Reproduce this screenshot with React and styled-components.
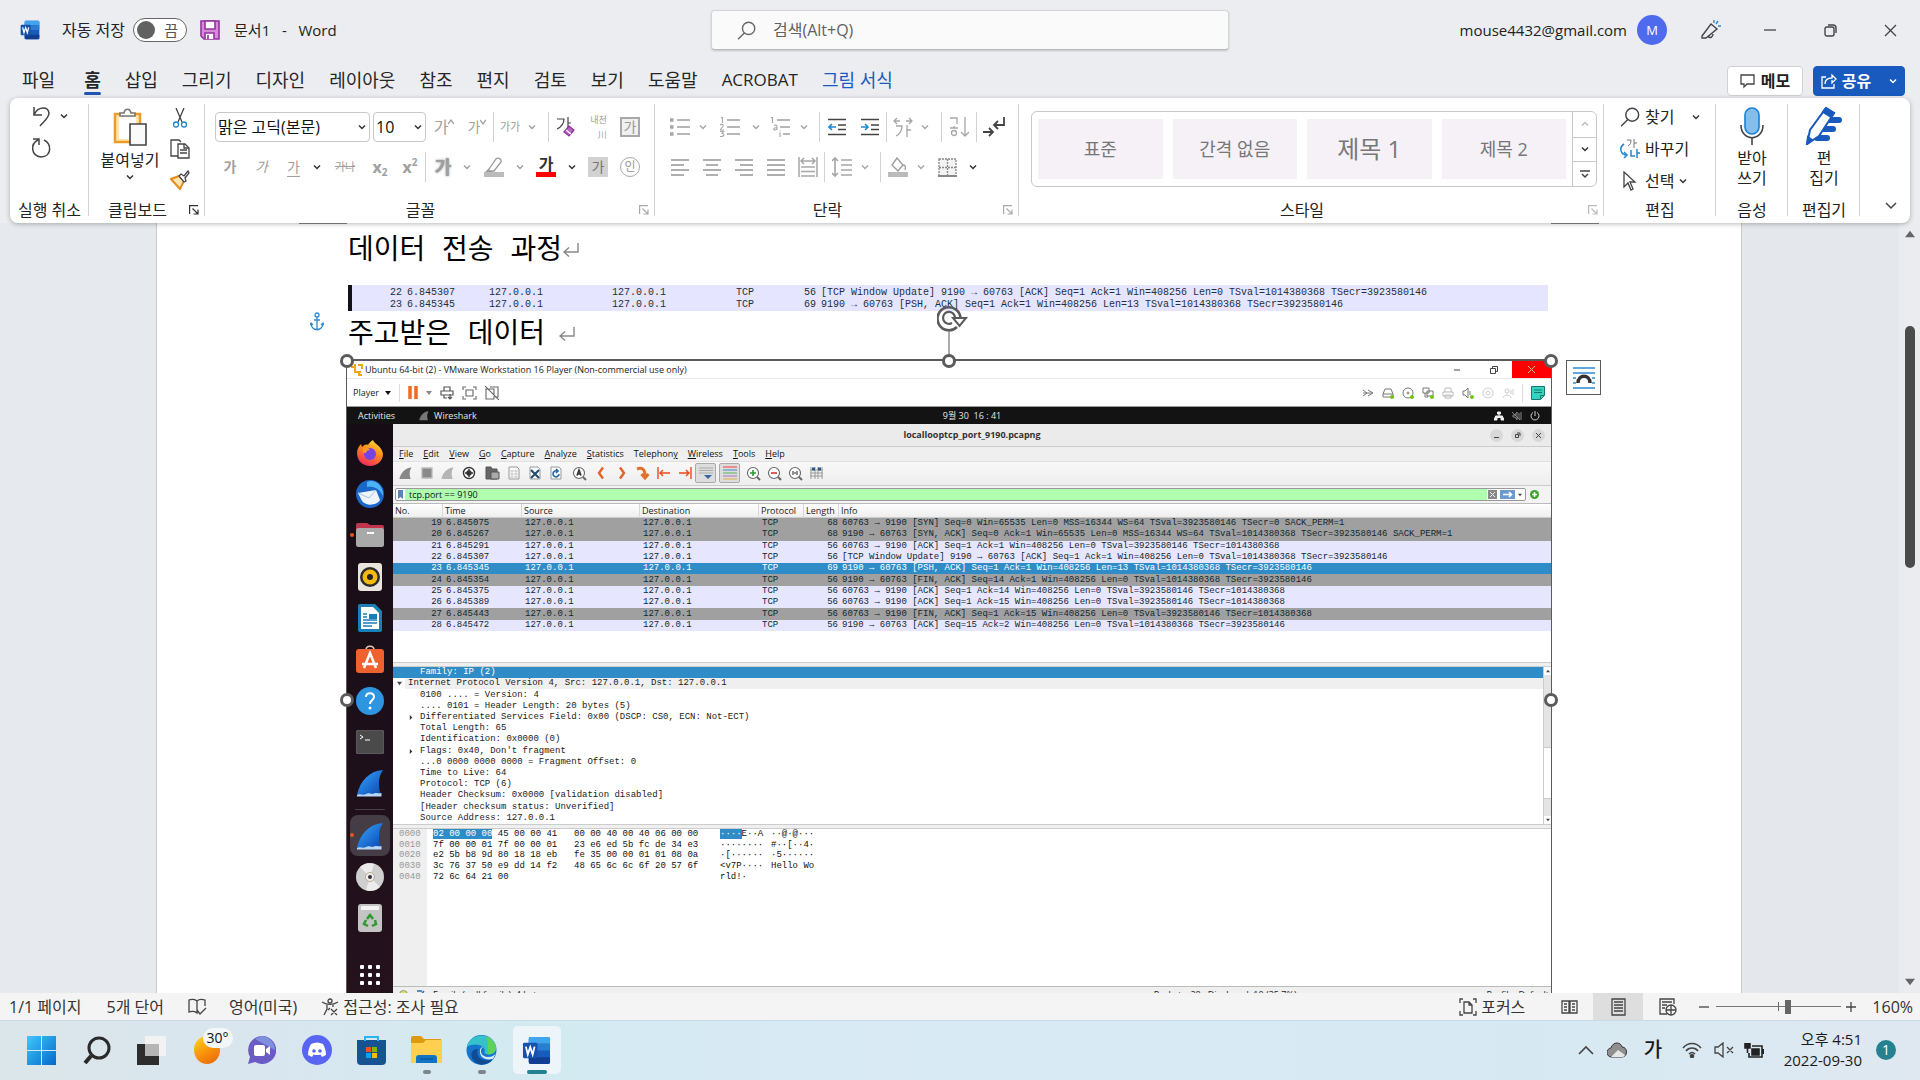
import React from "react";
import styled, { createGlobalStyle, css } from "styled-components";

const ui = `"Open Sans", "Noto Sans CJK KR", sans-serif`;
const mono = `"Liberation Mono", "Noto Sans CJK KR", monospace`;

const Global = createGlobalStyle`
  * { box-sizing: border-box; }
  body { margin: 0; font-family: ${ui}; font-size: 16px; line-height: 20px; color: #222; }
  button, input, select { font: inherit; color: inherit; margin: 0; padding: 0; border: 0; background: none; }
  button { display: flex; align-items: center; justify-content: center; white-space: nowrap; }
  svg { display: block; flex: none; }
`;

const Shell = styled.div`
  height: 100vh;
  min-width: 1600px;
  display: flex;
  flex-direction: column;
  overflow: hidden;
  background: #ebedf1;
`;

/* ---------- generic drawing ---------- */
const Svg = ({ w = 20, h = w, box, sw = 1.3, c = "#444", fill = "none", children }) => (
  <svg width={w} height={h} viewBox={box || `0 0 ${w} ${h}`} fill={fill} stroke={c} strokeWidth={sw} aria-hidden="true">
    {children}
  </svg>
);
const Chevron = ({ c = "#333" }) => (
  <Svg w={8} h={6} c={c} sw={1.5}><path d="M1 1.500 4 4.500 7 1.500" /></Svg>
);

/* ---------- title bar ---------- */
const TitleBar = styled.header`
  height: 60px;
  flex: none;
  display: grid;
  grid-template-columns: 1fr 518px 1fr;
  padding-left: 20px;
  align-items: center;
`;
const TitleLeft = styled.div`
  display: flex;
  align-items: center;
`;
const AutoSave = styled.label`
  display: flex;
  align-items: center;
  gap: 8px;
  margin: 0 13px 0 22px;
`;
const Switch = styled.span`
  width: 54px;
  height: 24px;
  display: flex;
  align-items: center;
  justify-content: space-between;
  padding: 0 8px 0 3px;
  border: 1px solid #666;
  border-radius: 12px;
  background: #fff;
  color: #555;
  font-size: 15px;
`;
const SwitchBox = styled.input`
  appearance: none;
  width: 18px;
  height: 18px;
  border-radius: 50%;
  background: #616161;
`;
const DocName = styled.span`
  margin-left: 14px;
  white-space: pre;
  font-size: 15px;
`;
const SearchBox = styled.label`
  height: 40px;
  display: flex;
  align-items: center;
  gap: 17px;
  padding: 0 25px;
  background: #fafafa;
  border: 1px solid #d4d5d8;
  border-bottom-color: #bbb;
  border-radius: 4px;
  box-shadow: 0 1px 2px rgba(0, 0, 0, 0.18);
`;
const SearchInput = styled.input`
  flex: 1;
  outline: none;
  &::placeholder { color: #616161; opacity: 1; }
`;
const TitleRight = styled.div`
  display: flex;
  align-items: center;
  justify-content: flex-end;
  font-size: 15px;
`;
const Avatar = styled.button`
  width: 30px;
  height: 30px;
  margin: 0 15px 0 10px;
  border-radius: 50%;
  background: #4f6bed;
  color: #fff;
  font-size: 13px;
`;
const WinButton = styled.button`
  width: 60px;
  height: 40px;
`;
const PenButton = styled(WinButton)`
  width: 58px;
`;

/* ---------- tabs ---------- */
const TabBar = styled.nav`
  height: 38px;
  flex: none;
  display: flex;
  align-items: center;
  gap: 10px;
  padding: 4px 15px 0;
`;
const Tab = styled.button`
  height: 34px;
  padding: 0 7px;
  margin-right: ${(p) => (p.$file ? 5 : 0)}px;
  font-size: ${(p) => (p.$latin ? 17 : 18)}px;
  color: ${(p) => (p.$blue ? "#185abd" : "#262626")};
  font-weight: ${(p) => (p.$on ? 700 : 400)};
  border-bottom: 3px solid transparent;
  position: relative;
  ${(p) => p.$on && css`
    &::after {
      content: "";
      position: absolute;
      left: 7px;
      right: 7px;
      bottom: 0;
      height: 3px;
      border-radius: 2px;
      background: #1f55b0;
    }
  `}
`;
const TabSpace = styled.span`
  flex: 1;
`;
const MemoButton = styled.button`
  width: 76px;
  height: 30px;
  gap: 5px;
  background: #fff;
  border: 1px solid #d1d1d1;
  border-radius: 4px;
  font-weight: 700;
`;
const ShareButton = styled(MemoButton)`
  width: 92px;
  border-color: #185abd;
  background: #185abd;
  color: #fff;
`;

/* ---------- ribbon ---------- */
const Ribbon = styled.section`
  flex: none;
  height: 125px;
  margin: 0 10px;
  display: flex;
  align-items: stretch;
  padding: 6px 0 3px;
  background: #fff;
  border-radius: 8px;
  box-shadow: 0 1px 5px rgba(0, 0, 0, 0.28);
  position: relative;
  z-index: 3;
`;
const Group = styled.div`
  width: ${(p) => p.$w}px;
  ${(p) => p.$grow && "flex: 1;"}
  display: flex;
  flex-direction: column;
  background: linear-gradient(#d1d1d1, #d1d1d1) right top / 1px 112px no-repeat;
`;
const GroupBody = styled.div`
  flex: 1;
  display: flex;
  flex-direction: ${(p) => (p.$row ? "row" : "column")};
  gap: ${(p) => p.$gap || 0}px;
  padding: ${(p) => p.$pad || "0"};
`;
const GroupLabel = styled.div`
  height: 20px;
  display: flex;
  align-items: center;
  white-space: nowrap;
`;
const LabelText = styled.span`
  flex: 1;
  text-align: center;
`;
const Launcher = styled.button`
  width: 16px;
  margin-right: 3px;
`;
const Row = styled.div`
  display: flex;
  align-items: center;
  height: ${(p) => p.$h || 30}px;
`;
const Tool = styled.button`
  width: ${(p) => p.$w}px;
  height: 30px;
  color: ${(p) => p.$c || "#a0a0a0"};
  font-size: ${(p) => p.$fs || 16}px;
  font-weight: ${(p) => (p.$bold ? 700 : 400)};
  font-style: ${(p) => (p.$italic ? "italic" : "normal")};
  text-decoration: ${(p) => p.$deco || "none"};
  text-underline-offset: 4px;
  ${(p) => p.$glow && "text-shadow: 0 0 1px #888, 0 0 3px #aaa;"}
`;
const Rule = styled.span`
  width: 1px;
  height: 30px;
  background: #d1d1d1;
  margin-left: ${(p) => p.$ml || 0}px;
`;
const Combo = styled.label`
  width: ${(p) => p.$w}px;
  height: 30px;
  margin-right: ${(p) => p.$mr || 0}px;
  padding: 0 3px 0 2px;
  display: flex;
  align-items: center;
  border: 1px solid #c8c8c8;
  border-radius: 4px;
`;
const ComboSelect = styled.select`
  appearance: none;
  flex: 1;
  min-width: 0;
  color: #111;
  outline: none;
`;
const Boxed = styled.span`
  width: 20px;
  height: 20px;
  display: flex;
  align-items: center;
  justify-content: center;
  font-size: 14px;
  line-height: 14px;
  color: ${(p) => (p.$dark ? "#777" : "#999")};
  background: ${(p) => p.$bg || "#f0f0f0"};
  border: ${(p) => (p.$bg ? 0 : 2)}px solid #a8a8a8;
  ${(p) => p.$round && "border-radius: 50%; border-width: 1px; background: #fff; font-size: 12px;"}
`;
const Bar = styled.span`
  display: flex;
  flex-direction: column;
  align-items: center;
  width: 20px;
  font-size: 16px;
  line-height: 15px;
  font-weight: 700;
  color: #333;
  border-bottom: 5px solid ${(p) => p.$c};
`;
const Script = styled.span`
  font-size: 10px;
  line-height: 10px;
  align-self: ${(p) => (p.$up ? "flex-start" : "flex-end")};
  padding: 5px 0;
`;
const Tiny = styled.span`
  display: flex;
  flex-direction: column;
  align-items: flex-end;
  gap: 1px;
  font-size: 9px;
  line-height: 14px;
`;
const PasteButton = styled.button`
  flex-direction: column;
  justify-content: flex-start;
  gap: 4px;
  width: 60px;
`;
const IconColumn = styled.div`
  display: flex;
  flex-direction: column;
  gap: 11px;
  button { width: 24px; height: 20px; }
`;
const Gallery = styled.div`
  flex: 1;
  height: 76px;
  margin: 7px 7px 0 12px;
  display: flex;
  border: 1px solid #c8c8c8;
  border-radius: 6px;
`;
const Cards = styled.div`
  flex: 1;
  display: grid;
  grid-template-columns: repeat(4, 1fr);
  gap: 10px;
  padding: 7px 6px;
`;
const StyleCard = styled.button`
  background: #f5f1f7;
  color: #777;
  font-size: ${(p) => p.$fs}px;
`;
const GalleryNav = styled.div`
  width: 24px;
  display: grid;
  grid-template-rows: repeat(3, 1fr);
  border-left: 1px solid #c8c8c8;
  button + button { border-top: 1px solid #c8c8c8; }
`;
const EditButton = styled.button`
  justify-content: flex-start;
  gap: 5px;
  height: 24px;
  color: #222;
`;
const Gap = styled.span`
  width: 8px;
`;
const TallButton = styled.button`
  flex-direction: column;
  gap: 3px;
  margin: 0 auto;
`;
const Collapse = styled.button`
  width: 50px;
  align-items: flex-end;
  padding: 0 0 10px 12px;
`;

/* ---------- document ---------- */
const Workspace = styled.main`
  flex: 1;
  min-height: 0;
  display: flex;
  overflow: hidden;
  background: linear-gradient(90deg, #e6eaee, #e4e7ec);
`;
const Canvas = styled.div`
  flex: 1;
  padding: 0 157px 0 156px;
  overflow: hidden;
`;
const Page = styled.article`
  min-height: 1200px;
  padding: 0 190px;
  background: #fff;
  border: solid #c6c9ce;
  border-width: 0 1px;
  position: relative;
`;
const Margins = styled.div`
  display: flex;
  justify-content: space-between;
  height: 1px;
  margin: 0 -48px;
  &::before, &::after { content: ""; width: 48px; background: #888; }
`;
const Heading = styled.h1`
  margin: 0;
  height: ${(p) => p.$h}px;
  padding: ${(p) => p.$pad} 0 ${(p) => p.$pb}px 1px;
  display: flex;
  align-items: center;
  gap: ${(p) => p.$gap || 1}px;
  font: 400 28px/32px ${mono};
  color: #000;
  white-space: pre;
  & > svg { margin-bottom: 4px; }
`;
const Strip = styled.table`
  width: calc(100% - 4px);
  height: 26px;
  margin-left: 1px;
  border-spacing: 0;
  table-layout: fixed;
  background: #e6e5ff;
  border-left: 4px solid #16101c;
  font: 10px/12px ${mono};
  color: #22303a;
  td { height: 12px; padding: 0; white-space: pre; overflow: hidden; }
  tr:first-child td { height: 14px; vertical-align: bottom; }
`;
const Num = styled.td`
  text-align: right;
`;
const AnchorMark = styled.span`
  position: absolute;
  left: 153px;
  top: 89px;
`;
const Picture = styled.figure`
  position: relative;
  margin: 0 -1px;
  height: 680px;
  border: solid #5b5b5b;
  border-width: 2px 1px 1px;
  display: flex;
  flex-direction: column;
  background: #fff;
`;
const Handle = styled.span`
  position: absolute;
  left: ${(p) => p.$x};
  top: ${(p) => p.$y};
  width: 14px;
  height: 14px;
  margin: -7px;
  border: 3px solid #5b5b5b;
  border-radius: 50%;
  background: #fff;
`;
const Rotate = styled.span`
  position: absolute;
  left: 50%;
  top: -58px;
  width: 32px;
  margin-left: -12px;
`;
const LayoutOptions = styled.button`
  position: absolute;
  right: -50px;
  top: -1px;
  width: 35px;
  height: 35px;
  border: 1px solid #5b5b5b;
  background: #fff;
`;
const VmTitle = styled.div`
  height: 18px;
  flex: none;
  display: flex;
  align-items: center;
  padding-left: 3px;
  gap: 2px;
  border-bottom: 1px solid #e6e6e6;
  font-size: 9px;
  line-height: 16px;
  color: #222;
`;
const VmButtons = styled.div`
  margin-left: auto;
  display: flex;
  align-self: stretch;
`;
const VmButton = styled.button`
  width: ${(p) => p.$w}px;
  background: ${(p) => (p.$red ? "#f00" : "transparent")};
`;
const VmBar = styled.div`
  height: 28px;
  flex: none;
  display: flex;
  align-items: center;
  padding: 0 6px;
  gap: 8px;
  font-size: 9px;
  border-bottom: 1px solid #999;
`;
const VmRule = styled.span`
  width: 1px;
  height: 18px;
  background: #ddd;
`;
const Push = styled.span`
  margin-left: auto;
`;
const PlayerButton = styled.button`
  gap: 6px;
`;
const TopBar = styled.div`
  height: 17px;
  flex: none;
  display: grid;
  grid-template-columns: 46px 1fr auto 1fr;
  align-items: center;
  background: #131313;
  color: #e6e6e6;
  font-size: 9px;
  line-height: 16px;
  white-space: nowrap;
`;
const TopLeft = styled.div`
  display: flex;
  grid-column: 1 / 3;
  grid-row: 1;
  gap: 24px;
  padding-left: 11px;
`;
const TopApp = styled.span`
  display: flex;
  align-items: center;
  gap: 5px;
`;
const Clock = styled.span`
  grid-column: 3;
  grid-row: 1;
`;
const TopRight = styled.div`
  grid-column: 4;
  grid-row: 1;
  justify-self: end;
  display: flex;
  gap: 8px;
  padding-right: 11px;
`;
const Desktop = styled.div`
  flex: 1;
  min-height: 0;
  display: flex;
`;
const Dock = styled.div`
  width: 46px;
  flex: none;
  padding-top: 8px;
  background: linear-gradient(#150d16, #25121d);
  display: flex;
  flex-direction: column;
  align-items: center;
`;
const DockList = styled.div`
  height: 372px;
  display: flex;
  flex-direction: column;
`;
const DockItem = styled.button`
  width: 46px;
  flex: ${(p) => (p.$fixed ? "none" : "1")};
  height: 41px;
  position: relative;
  ${(p) => p.$dot && css`
    &::before {
      content: "";
      position: absolute;
      left: 3px;
      top: 18px;
      width: 4px;
      height: 4px;
      border-radius: 50%;
      background: #e95420;
    }
  `}
`;
const DockRule = styled.span`
  width: 30px;
  height: 1px;
  margin: 5px 0;
  background: #4b3f48;
`;
const DockActive = styled.span`
  width: 40px;
  height: 41px;
  display: flex;
  align-items: center;
  justify-content: center;
  border-radius: 8px;
  background: #453d45;
`;
const DockFoot = styled.div`
  margin-top: 27px;
`;
const Shark = styled.div`
  flex: 1;
  min-width: 0;
  display: flex;
  flex-direction: column;
  background: #fff;
  font-size: 9px;
  line-height: 12px;
`;
const SharkTitle = styled.div`
  height: 23px;
  flex: none;
  display: grid;
  grid-template-columns: 1fr auto 1fr;
  align-items: center;
  background: #ebebeb;
  border-bottom: 1px solid #ccc;
  font-weight: 700;
  color: #333;
`;
const SharkWin = styled.div`
  justify-self: end;
  display: flex;
  gap: 8px;
  padding-right: 6px;
`;
const RoundButton = styled.button`
  width: 13px;
  height: 13px;
  border-radius: 50%;
  background: #d8d8d8;
`;
const MenuBar = styled.div`
  height: 15px;
  flex: none;
  display: flex;
  align-items: center;
  gap: 10px;
  padding-left: 6px;
  background: #efefef;
  border-bottom: 1px solid #e0e0e0;
  color: #111;
`;
const SharkTools = styled.div`
  height: 24px;
  flex: none;
  display: flex;
  align-items: flex-start;
  padding: 1px 0 0 2px;
  background: linear-gradient(#f8f8f8, #eee);
  border-bottom: 1px solid #ccc;
`;
const SharkTool = styled.button`
  width: 21px;
  height: 20px;
  margin-left: ${(p) => p.$ml || 0}px;
  ${(p) => p.$on && "background: #ddd; border: 1px solid #aaa; border-radius: 2px;"}
`;
const FilterRow = styled.div`
  height: 18px;
  flex: none;
  display: flex;
  align-items: center;
  gap: 4px;
  padding: 0 12px 0 2px;
  background: #f3f3f3;
  border-bottom: 1px solid #bbb;
`;
const FilterBox = styled.label`
  flex: 1;
  height: 13px;
  display: flex;
  align-items: center;
  gap: 3px;
  padding: 0 3px 0 2px;
  border: 1px solid #999;
  border-radius: 2px;
  background: linear-gradient(90deg, #fff 9px, #afffaf 9px calc(100% - 38px), #fff calc(100% - 38px));
`;
const FilterInput = styled.input`
  flex: 1;
  height: 11px;
  padding-left: 3px;
  line-height: 11px;
  color: #111;
  outline: none;
`;
const PacketPane = styled.div`
  height: 159px;
  flex: none;
  border-bottom: 1px solid #ccc;
`;
const Packets = styled.table`
  width: 100%;
  height: 127px;
  table-layout: fixed;
  border-spacing: 0;
  th {
    height: 14px;
    padding: 0 0 0 2px;
    text-align: left;
    font-weight: 400;
    color: #222;
    background: linear-gradient(#fff, #eee);
    border-right: 1px solid #d8d8d8;
    border-bottom: 1px solid #ccc;
  }
  th:last-child { border-right: 0; }
  td {
    padding: 0 0 0 3px;
    font: 9px/11px ${mono};
    white-space: pre;
  }
  td:nth-child(1), td:nth-child(6) { padding: 0 1px 0 0; text-align: right; }
`;
const tones = {
  gray: ["#a0a0a0", "#12272e"],
  lilac: ["#e7e6ff", "#12272e"],
  blue: ["#308cc6", "#fff"],
};
const PacketRow = styled.tr`
  background: ${(p) => tones[p.$tone][0]};
  color: ${(p) => tones[p.$tone][1]};
`;
const Split = styled.div`
  height: ${(p) => p.$h}px;
  flex: none;
  background: #efefef;
  border-bottom: 1px solid #ccc;
`;
const Details = styled.div`
  height: 158px;
  flex: none;
  display: flex;
  border-bottom: 1px solid #ccc;
`;
const Tree = styled.ul`
  flex: 1;
  margin: 0;
  padding: 0;
  list-style: none;
  display: grid;
  grid-template-rows: repeat(14, 1fr);
  font: 9px/11px ${mono};
  color: #222;
`;
const Leaf = styled.li`
  display: flex;
  align-items: center;
  white-space: pre;
  padding-left: ${(p) => (p.$top ? 3 : 15)}px;
  background: ${(p) => (p.$sel ? "#308cc6" : p.$top ? "linear-gradient(90deg, #fff 12px, #efefef 12px)" : "transparent")};
  color: ${(p) => (p.$sel ? "#fff" : "inherit")};
`;
const Twist = styled.span`
  width: 12px;
  display: flex;
  padding-left: 1px;
`;
const MiniScroll = styled.div`
  width: 8px;
  display: flex;
  flex-direction: column;
  background: #e4e4e4;
  border-left: 1px solid #ccc;
`;
const MiniArrow = styled.span`
  height: 8px;
  display: flex;
  align-items: center;
  justify-content: center;
  background: #fff;
`;
const MiniThumb = styled.span`
  height: 52px;
  margin: ${(p) => p.$top}px 0 auto;
  background: #fff;
  border: solid #ccc;
  border-width: 1px 0;
`;
const HexPane = styled.div`
  flex: none;
  height: 157px;
  background: linear-gradient(90deg, #efefef 34px, #fff 34px);
`;
const Hex = styled.table`
  height: 53px;
  border-spacing: 0;
  table-layout: fixed;
  width: 480px;
  font: 9px/10px ${mono};
  color: #111;
  td { padding: 0; white-space: pre; }
  td:first-child { padding-left: 6px; color: #999; }
`;
const Mark = styled.mark`
  background: #308cc6;
  color: #fff;
`;
const SharkStatus = styled.div`
  flex: none;
  height: 16px;
  display: flex;
  align-items: center;
  gap: 8px;
  padding: 0 2px 0 6px;
  background: #efefef;
  border-top: 1px solid #bbb;
`;
const StatusSpread = styled.span`
  margin-left: auto;
  margin-right: ${(p) => p.$mr || 0}px;
`;
const ScrollRail = styled.div`
  width: 21px;
  flex: none;
  display: flex;
  flex-direction: column;
  align-items: center;
  justify-content: space-between;
  padding: 6px 0;
  background: #eaecef;
`;
const ScrollTrack = styled.div`
  flex: 1;
  padding-top: 87px;
`;
const ScrollThumb = styled.div`
  width: 10px;
  height: 242px;
  border-radius: 5px;
  background: #4b4b4b;
`;

/* ---------- status bar ---------- */
const StatusBar = styled.footer`
  height: 28px;
  flex: none;
  display: flex;
  align-items: center;
  padding: 0 7px 0 9px;
  background: #f4f4f4;
  border-bottom: 1px solid #c9dbe6;
  color: #333;
`;
const StatusButton = styled.button`
  gap: 4px;
  height: 27px;
  margin-right: ${(p) => p.$mr || 0}px;
  width: ${(p) => (p.$w ? p.$w + "px" : "auto")};
  background: ${(p) => (p.$on ? "#dedede" : "transparent")};
`;
const StatusSpace = styled.span`
  flex: 1;
`;
const Zoom = styled.input`
  appearance: none;
  width: 125px;
  height: 20px;
  margin: 0 5px 0 1px;
  outline: none;
  background:
    linear-gradient(#666, #666) center / 1px 9px no-repeat,
    linear-gradient(#777, #777) center / 100% 1px no-repeat;
  &::-webkit-slider-thumb { appearance: none; width: 6px; height: 14px; background: #666; }
`;

/* ---------- taskbar ---------- */
const Taskbar = styled.footer`
  height: 59px;
  flex: none;
  display: flex;
  align-items: center;
  padding: 0 24px 1px 14px;
  background: linear-gradient(90deg, #dbe6ea 0%, #d9e6ef 14%, #d3eaf1 28%, #d9eaf4 45%, #d6e9f2 80%, #dfe8f1 100%);
  color: #1a1a1a;
`;
const Task = styled.button`
  width: 55px;
  height: 50px;
  position: relative;
  &::after {
    content: "";
    position: absolute;
    bottom: 1px;
    width: ${(p) => (p.$active ? 20 : 8)}px;
    height: 4px;
    border-radius: 2px;
    background: ${(p) => (p.$active ? "#25808f" : p.$open ? "#7c868a" : "transparent")};
  }
`;
const Tile = styled.span`
  width: 48px;
  height: 48px;
  display: flex;
  align-items: center;
  justify-content: center;
  border-radius: 5px;
  background: #edf5fb;
`;
const Weather = styled.span`
  position: relative;
  width: 26px;
  height: 28px;
  border-radius: 50%;
  background: linear-gradient(150deg, #ffd91a, #f78a0a 60%, #e2650c);
`;
const Temp = styled.span`
  position: absolute;
  left: 9px;
  top: -8px;
  width: 30px;
  height: 20px;
  border-radius: 10px;
  background: #f4f7f8;
  font-size: 14px;
  color: #111;
`;
const Tray = styled.div`
  margin-left: auto;
  display: flex;
  align-items: center;
`;
const TrayButton = styled.button`
  width: ${(p) => p.$w || 30}px;
  height: 40px;
  font-size: ${(p) => (p.$ime ? 20 : 16)}px;
  font-weight: ${(p) => (p.$ime ? 500 : 400)};
`;
const DateTime = styled.button`
  flex-direction: column;
  align-items: flex-end;
  width: 91px;
  margin-right: 14px;
  font-size: 15px;
  line-height: 21px;
`;
const Notice = styled.button`
  width: 20px;
  height: 20px;
  border-radius: 50%;
  background: #25808f;
  color: #fff;
  font-size: 14px;
`;

/* ---------- icons ---------- */
const WordLogo = ({ s = 20 }) => (
  <svg width={s} height={s} viewBox="0 0 30 30" aria-hidden="true">
    <rect x="7" y="1" width="22" height="28" rx="2" fill="#185abd" />
    <path d="M7 3a2 2 0 0 1 2-2h18a2 2 0 0 1 2 2v5H7z" fill="#41a5ee" />
    <path d="M7 8h22v7H7z" fill="#2b7cd3" />
    <path d="M7 22h22v5a2 2 0 0 1-2 2H9a2 2 0 0 1-2-2z" fill="#103f91" />
    <rect x="1" y="7" width="15" height="16" rx="1.5" fill="#1652a9" />
    <path d="m4 11 2 8 2.500-7.500L11 19l2-8" fill="none" stroke="#fff" strokeWidth="1.900" />
  </svg>
);
const Lens = ({ s = 18, c = "#555", sw = 1.3 }) => (
  <Svg w={s} box="0 0 18 18" c={c} sw={sw}><circle cx="11" cy="7" r="5.800" /><path d="M7 11.300 1 17.300" /></Svg>
);
const LaunchIcon = ({ c }) => (
  <Svg w={10} c={c} sw={1.2}><path d="M9 .6H.6V9M3.500 3.500 9 9M9 4.500V9H4.500" /></Svg>
);
const Lines = ({ rows, c = "#a6a6a6" }) => (
  <Svg w={18} h={17} c={c} sw={1.8}>
    {rows.map(([a, b], i) => <path key={i} d={`M${a} ${1 + i * 5}H${b}`} />)}
  </Svg>
);
const listMarks = {
  dots: ["M0 3h3.500", "M0 10h3.500", "M0 17h3.500"],
  nums: ["M1 1l1.500-1v6", "M0 8c2-2 4 0 2.500 2L0 13h4", "M0 14.500h3.500L2 16.500c3 0 2 3-.5 3H0"],
  multi: ["M1 1l1.500-1v6", "M4 8.500c2-1 3 0 3 1v3.500M7 10.500c-4 0-4 2.500-2 2.500l2-1", "M10 15.500v4.500M10 13.500v1"],
};
const ListIcon = ({ kind }) => (
  <Svg w={20} c="#a6a6a6" sw={1.6}>
    {[3, 10, 17].map((y, i) => (
      <g key={y}>
        <path d={`M${7 + (kind === "multi" ? i * 3 : 0)} ${y}H20`} />
        <path d={listMarks[kind][i]} strokeWidth={kind === "dots" ? 3.5 : 1.1} />
      </g>
    ))}
  </Svg>
);
const Indent = ({ right }) => (
  <Svg w={18} h={18} c="#444" sw={1.6}>
    <path d="M0 1.500H18M10 7H18M10 11.500H18M0 16.500H18" />
    <path d={right ? "M0 9H7M4 6l3 3-3 3" : "M8 9H1M4 6 1 9l3 3"} stroke="#1e8ad6" />
  </Svg>
);
const Fin = ({ s = 28, gray }) => (
  <svg width={s} height={s} viewBox="0 0 28 28" aria-hidden="true">
    <defs>
      <linearGradient id="fin" x1="0" y1="0" x2="1" y2="1"><stop offset="0" stopColor="#3aa8ff" /><stop offset="1" stopColor="#0746b0" /></linearGradient>
    </defs>
    <path d="M1 26C4 12 13 2 27 1c-5 7-5 16-2 25z" fill={gray || "url(#fin)"} />
    {!gray && <path d="M1 26c3-2 6 1 9-1s5 1 8-.500 5 .5 7.500-.500V27.500H1z" fill="#b9d6f5" />}
  </svg>
);
const Glass = ({ sign, c }) => (
  <Svg w={15} c="#666" sw={1.1}><circle cx="7" cy="7" r="5.500" fill="#fff" /><path d="m11 11 3 3" strokeWidth="2" /><path d={sign} stroke={c} strokeWidth="1.600" /></Svg>
);
const Doc = ({ children }) => (
  <Svg w={12} h={14} c="#999" sw={1}><path d="M1 1h8l2 2v10H1z" fill="#fafafa" />{children}</Svg>
);
const Tri = ({ c = "#444", up, s = 5 }) => (
  <svg width={s} height={s} viewBox="0 0 6 6" fill={c} aria-hidden="true"><path d={up ? "M0 5h6L3 1z" : "M0 1h6L3 5z"} /></svg>
);
const Device = ({ d, dot, c = "#777" }) => (
  <Svg w={12} h={12} c={c} sw={1}>{d}{dot && <circle cx="10" cy="10" r="2" fill="#72c400" stroke="none" />}</Svg>
);
const Return = () => (
  <Svg w={16} h={16} c="#888" sw={1.4}><path d="M15 1v9H1M6 5.500 1 10l5 4.500" /></Svg>
);

const dockIcons = [
  ["Firefox", <svg width="28" height="28" viewBox="0 0 28 28"><defs><linearGradient id="ff" x1=".8" y1="0" x2=".3" y2="1"><stop offset="0" stopColor="#ffe03a" /><stop offset=".45" stopColor="#ff8a1c" /><stop offset="1" stopColor="#f2265f" /></linearGradient></defs><path d="M17 1c1 4 9 6 10 14 0 7-6 12-13 12S1 22 1 14c0-4 2-7 4-9l1 3c2-2 4-3 6-2 1-2 3-4 5-5z" fill="url(#ff)" /><circle cx="14" cy="15" r="6" fill="#7542e5" /><path d="M7 9c3-1 6 0 7 2-2 0-4 1-4 3-3 0-4-2-3-5z" fill="#ff9a25" /></svg>],
  ["Thunderbird", <svg width="30" height="30" viewBox="0 0 30 30"><circle cx="15" cy="15" r="14" fill="#1b66c9" /><path d="M12 3c8-4 17 4 16 14-4-8-9-10-16-9z" fill="#4cb4f5" /><path d="m3 14 18-3 4 10c-3 5-13 7-18 1z" fill="#eef4fb" /><path d="m3 14 11 5 7-8" fill="none" stroke="#aac3dd" /></svg>],
  ["Files", <svg width="28" height="26" viewBox="0 0 28 26"><path d="M0 3a2 2 0 0 1 2-2h9l3 2h12a2 2 0 0 1 2 2v8H0z" fill="#c3344c" /><rect y="6" width="28" height="19" rx="2.500" fill="#a9a9a9" /><path d="M11 11h7" stroke="#fff" strokeWidth="2" /></svg>],
  ["Rhythmbox", <svg width="24" height="28" viewBox="0 0 24 28"><rect width="24" height="28" rx="3" fill="#e9e5dc" /><circle cx="12" cy="14" r="10" fill="#2b2b2b" /><circle cx="12" cy="14" r="7.500" fill="#f5b90f" /><circle cx="12" cy="14" r="3" fill="#222" /></svg>],
  ["Writer", <svg width="24" height="28" viewBox="0 0 24 28"><path d="M2 0h15l7 7v19a2 2 0 0 1-2 2H2a2 2 0 0 1-2-2V2a2 2 0 0 1 2-2z" fill="#1a7fb8" /><path d="M3 3h12l6 6v16H3z" fill="#fff" /><path d="M5 10h4M5 13h4M5 16h14M5 19h14M5 22h9" stroke="#1a7fb8" strokeWidth="1.500" /><path d="M11 10h8v5h-8z" fill="#1a7fb8" /></svg>],
  ["Software", <svg width="28" height="28" viewBox="0 0 28 28"><path d="M10 5c0-5 8-5 8 0" fill="none" stroke="#e9c4ae" strokeWidth="1.500" /><rect y="4" width="28" height="24" rx="3" fill="#ef6230" /><path d="m8 23 6-15 6 15M6 19h16" stroke="#fff" strokeWidth="2.500" fill="none" /></svg>],
  ["Help", <svg width="28" height="28" viewBox="0 0 28 28"><circle cx="14" cy="14" r="14" fill="#2e95e0" /><path d="M10 10c0-5 8-5 8 0 0 3-4 3-4 7" stroke="#fff" strokeWidth="2" fill="none" /><circle cx="14" cy="21" r="1.500" fill="#fff" /></svg>],
  ["Terminal", <svg width="28" height="24" viewBox="0 0 28 24"><rect width="28" height="24" rx="3" fill="#4a4a4a" stroke="#666" /><path d="m4 5 3 2-3 2M9 10h5" stroke="#fff" fill="none" /></svg>],
  ["Wireshark", <Fin />],
];

const packets = [
  [19, "6.845075", 68, "60763 → 9190 [SYN] Seq=0 Win=65535 Len=0 MSS=16344 WS=64 TSval=3923580146 TSecr=0 SACK_PERM=1", "gray"],
  [20, "6.845267", 68, "9190 → 60763 [SYN, ACK] Seq=0 Ack=1 Win=65535 Len=0 MSS=16344 WS=64 TSval=1014380368 TSecr=3923580146 SACK_PERM=1", "gray"],
  [21, "6.845291", 56, "60763 → 9190 [ACK] Seq=1 Ack=1 Win=408256 Len=0 TSval=3923580146 TSecr=1014380368", "lilac"],
  [22, "6.845307", 56, "[TCP Window Update] 9190 → 60763 [ACK] Seq=1 Ack=1 Win=408256 Len=0 TSval=1014380368 TSecr=3923580146", "lilac"],
  [23, "6.845345", 69, "9190 → 60763 [PSH, ACK] Seq=1 Ack=1 Win=408256 Len=13 TSval=1014380368 TSecr=3923580146", "blue"],
  [24, "6.845354", 56, "9190 → 60763 [FIN, ACK] Seq=14 Ack=1 Win=408256 Len=0 TSval=1014380368 TSecr=3923580146", "gray"],
  [25, "6.845375", 56, "60763 → 9190 [ACK] Seq=1 Ack=14 Win=408256 Len=0 TSval=3923580146 TSecr=1014380368", "lilac"],
  [26, "6.845389", 56, "60763 → 9190 [ACK] Seq=1 Ack=15 Win=408256 Len=0 TSval=3923580146 TSecr=1014380368", "lilac"],
  [27, "6.845443", 56, "60763 → 9190 [FIN, ACK] Seq=1 Ack=15 Win=408256 Len=0 TSval=3923580146 TSecr=1014380368", "gray"],
  [28, "6.845472", 56, "9190 → 60763 [ACK] Seq=15 Ack=2 Win=408256 Len=0 TSval=1014380368 TSecr=3923580146", "lilac"],
];
const tree = [
  ["Family: IP (2)", { $sel: true }],
  ["Internet Protocol Version 4, Src: 127.0.0.1, Dst: 127.0.0.1", { $top: true }, "down"],
  ["0100 .... = Version: 4"],
  [".... 0101 = Header Length: 20 bytes (5)"],
  ["Differentiated Services Field: 0x00 (DSCP: CS0, ECN: Not-ECT)", {}, "right"],
  ["Total Length: 65"],
  ["Identification: 0x0000 (0)"],
  ["Flags: 0x40, Don't fragment", {}, "right"],
  ["...0 0000 0000 0000 = Fragment Offset: 0"],
  ["Time to Live: 64"],
  ["Protocol: TCP (6)"],
  ["Header Checksum: 0x0000 [validation disabled]"],
  ["[Header checksum status: Unverified]"],
  ["Source Address: 127.0.0.1"],
];
const hex = [
  ["0000", "02 00 00 00", " 45 00 00 41", "00 00 40 00 40 06 00 00", "····", "E··A", "··@·@···"],
  ["0010", "", "7f 00 00 01 7f 00 00 01", "23 e6 ed 5b fc de 34 e3", "", "········", "#··[··4·"],
  ["0020", "", "e2 5b b8 9d 80 18 18 eb", "fe 35 00 00 01 01 08 0a", "", "·[······", "·5······"],
  ["0030", "", "3c 76 37 50 e9 dd 14 f2", "48 65 6c 6c 6f 20 57 6f", "", "<v7P····", "Hello Wo"],
  ["0040", "", "72 6c 64 21 00", "", "", "rld!·", ""],
];
const strip = [
  [22, "6.845307", 56, "[TCP Window Update] 9190 → 60763 [ACK] Seq=1 Ack=1 Win=408256 Len=0 TSval=1014380368 TSecr=3923580146"],
  [23, "6.845345", 69, "9190 → 60763 [PSH, ACK] Seq=1 Ack=1 Win=408256 Len=13 TSval=1014380368 TSecr=3923580146"],
];
const menus = [["F", "ile"], ["E", "dit"], ["V", "iew"], ["G", "o"], ["C", "apture"], ["A", "nalyze"], ["S", "tatistics"], ["Telephon", "y"], ["W", "ireless"], ["T", "ools"], ["H", "elp"]];

function FontGroup() {
  return (
    <Group $w={450}>
      <GroupBody $pad="8px 0 0 10px" $gap={10}>
        <Row>
          <Combo $w={155} $mr={3}><ComboSelect aria-label="글꼴"><option>맑은 고딕(본문)</option></ComboSelect><Chevron /></Combo>
          <Combo $w={53}><ComboSelect aria-label="글꼴 크기"><option>10</option></ComboSelect><Chevron /></Combo>
          <Tool $w={36}>가<Svg w={6} h={16} c="#a0a0a0"><path d="M0 5 3 1l3 4" /></Svg></Tool>
          <Tool $w={30} $fs={14}>가<Svg w={6} h={16} c="#a0a0a0"><path d="M0 1l3 4 3-4" /></Svg></Tool>
          <Rule $ml={1} />
          <Tool $w={32} $fs={11}>가가</Tool>
          <Tool $w={12}><Chevron c="#a0a0a0" /></Tool>
          <Rule $ml={10} />
          <Tool $w={34} $c="#444"><Svg w={20} h={22} c="#444" sw={1.2}><path d="M1 3h7c0 5-3 8-7 10M12 1v14M12 7h3" /><path d="m8 16 5-6 5 4-5 6z" fill="#b766c2" stroke="#8e2f9c" /><path d="m10 14 5 4" stroke="#fff" /></Svg></Tool>
          <Tool $w={31}><Tiny><span>내천</span><span>川</span></Tiny></Tool>
          <Tool $w={32}><Boxed>가</Boxed></Tool>
        </Row>
        <Row>
          <Tool $w={30} $fs={14} $bold>가</Tool>
          <Tool $w={33} $fs={14} $italic>가</Tool>
          <Tool $w={31} $fs={14} $deco="underline">가</Tool>
          <Tool $w={16}><Chevron /></Tool>
          <Tool $w={40} $fs={11} $deco="line-through">가나</Tool>
          <Tool $w={30} $bold>x<Script>2</Script></Tool>
          <Tool $w={30} $bold>x<Script $up>2</Script></Tool>
          <Rule />
          <Tool $w={34} $bold $glow $fs={18}>가</Tool>
          <Tool $w={14}><Chevron c="#a0a0a0" /></Tool>
          <Tool $w={40}><Svg w={20} h={20} c="#999" sw={1.3}><path d="m5 12 7-10c2-2 6 0 5 3l-7 9H5zM5 12l-3 3h6" /><path d="M0 17.500h20" stroke="#bbb" strokeWidth="5" /></Svg></Tool>
          <Tool $w={12}><Chevron c="#a0a0a0" /></Tool>
          <Tool $w={40}><Bar $c="#f00">가</Bar></Tool>
          <Tool $w={12}><Chevron /></Tool>
          <Tool $w={40}><Boxed $bg="#d2d2d2" $dark>가</Boxed></Tool>
          <Tool $w={24}><Boxed $round>인</Boxed></Tool>
        </Row>
      </GroupBody>
      <GroupLabel><LabelText>글꼴</LabelText><Launcher aria-label="글꼴 옵션"><LaunchIcon c="#aaa" /></Launcher></GroupLabel>
    </Group>
  );
}

function ParagraphGroup() {
  const g = "#a6a6a6";
  return (
    <Group $w={364}>
      <GroupBody $pad="8px 0 0 9px" $gap={10}>
        <Row>
          <Tool $w={32}><ListIcon kind="dots" /></Tool><Tool $w={14}><Chevron c={g} /></Tool>
          <Tool $w={40}><ListIcon kind="nums" /></Tool><Tool $w={12}><Chevron c={g} /></Tool>
          <Tool $w={36}><ListIcon kind="multi" /></Tool><Tool $w={12}><Chevron c={g} /></Tool>
          <Rule $ml={9} />
          <Tool $w={33}><Indent /></Tool><Tool $w={33}><Indent right /></Tool>
          <Rule />
          <Tool $w={32}><Svg w={20} c={g}><path d="M1 4h6M4 1 1 4l3 3M13 4h6M16 1l3 3-3 3M3 9h6c0 5-2 8-6 10M14 8v12M14 13h4" /></Svg></Tool>
          <Tool $w={12}><Chevron c={g} /></Tool>
          <Rule $ml={10} />
          <Tool $w={34}><Svg w={20} c={g}><path d="M1 1h7v6M1 11h8M5 9v2M16 0v19M12 15l4 4 4-4" /><circle cx="5" cy="16" r="2.500" /></Svg></Tool>
          <Rule />
          <Tool $w={34}><Svg w={22} h={20} c="#444" sw={1.8}><path d="M21 0v8H11M15 4l-4 4 4 4M0 15h10M6 11l4 4-4 4" /></Svg></Tool>
        </Row>
        <Row>
          <Tool $w={32}><Lines rows={[[0, 18], [0, 13], [0, 18], [0, 13]]} /></Tool>
          <Tool $w={32}><Lines rows={[[0, 18], [3, 15], [0, 18], [3, 15]]} /></Tool>
          <Tool $w={32}><Lines rows={[[0, 18], [5, 18], [0, 18], [5, 18]]} /></Tool>
          <Tool $w={32}><Lines rows={[[0, 18], [0, 18], [0, 18], [0, 18]]} /></Tool>
          <Tool $w={32}><Svg w={20} c={g} sw={1.5}><path d="M1 0v20M19 0v20M3 4h14M6 1 3 4l3 3M14 1l3 3-3 3M3 10h14M3 14.500h14M3 19h14" /></Svg></Tool>
          <Rule />
          <Tool $w={34}><Svg w={20} c={g} sw={1.6}><path d="M3 1v18M0 4l3-3 3 3M0 16l3 3 3-3M9 3h11M9 8h11M9 13h11M9 18h11" /></Svg></Tool>
          <Tool $w={12}><Chevron c={g} /></Tool>
          <Rule $ml={9} />
          <Tool $w={34}><Svg w={20} c="#999"><path d="m9 1 6 7-5 6-6-6zM15 8c2 0 3 1 2 5" /><path d="M0 17.500h20" stroke="#bbb" strokeWidth="5" /></Svg></Tool>
          <Tool $w={12}><Chevron c={g} /></Tool>
          <Tool $w={40}><Svg w={19} c="#888"><path d="M1 1h17v17H1zM9.500 1v17M1 9.500h17" strokeDasharray="2 1" fill="#f3f3f3" /><path d="M0 18h19" strokeWidth="2" /></Svg></Tool>
          <Tool $w={12}><Chevron /></Tool>
        </Row>
      </GroupBody>
      <GroupLabel><LabelText>단락</LabelText><Launcher aria-label="단락 옵션"><LaunchIcon c="#aaa" /></Launcher></GroupLabel>
    </Group>
  );
}

function WordRibbon() {
  return (
    <Ribbon>
      <Group $w={79}>
        <GroupBody $pad="2px 0 0 17px" $gap={12}>
          <Row $h={20}>
            <Tool $w={28}><Svg w={20} h={21} sw={1.5}><path d="M3 1v8h8M3 9c4-9 14-9 15-2 0 5-5 8-9 13" /></Svg></Tool>
            <Tool $w={18}><Chevron /></Tool>
          </Row>
          <Row $h={20}>
            <Tool $w={28}><Svg w={20} sw={1.5}><path d="M2 1h6v6M7 2c-8 4-7 16 3 17 11 0 11-14 3-17" /></Svg></Tool>
          </Row>
        </GroupBody>
        <GroupLabel><LabelText>실행 취소</LabelText></GroupLabel>
      </Group>
      <Group $w={116}>
        <GroupBody $row $pad="4px 0 0 11px" $gap={8}>
          <PasteButton>
            <Svg w={34} h={38} sw={1.6}><path d="M2 6h25v28H2z" fill="#fde5b0" stroke="#eb9c26" strokeWidth="2.500" /><path d="M6 9h17v22H6z" fill="#fff" stroke="none" /><path d="M7 8V5h4c1-5 6-5 7 0h4v3z" fill="#fff" stroke="#777" /><path d="M17 16h16v21H17z" fill="#fafafa" /></Svg>
            붙여넣기
            <Chevron />
          </PasteButton>
          <IconColumn>
            <button aria-label="잘라내기"><Svg w={16} h={20}><path d="M4 0l6 14M12 0 6 14" /><circle cx="4" cy="16.500" r="2.500" stroke="#2086cf" /><circle cx="12" cy="16.500" r="2.500" stroke="#2086cf" /></Svg></button>
            <button aria-label="복사"><Svg w={20}><path d="M8 17H1V1h8l2 2" /><path d="M8 5h7l4 4v10H8z" fill="#fff" /><path d="M10 11h7M10 14h7M14 5v4h5" /></Svg></button>
            <button aria-label="서식 복사"><Svg w={20}><path d="M1 9l8-3 5 5-4 8z" fill="#fde5b0" stroke="#e58a1c" strokeWidth="2" /><path d="m9 6 2-2 3 2 4-5 1 2-4 5 1 3-2 1z" fill="#fff" /></Svg></button>
          </IconColumn>
        </GroupBody>
        <GroupLabel><LabelText>클립보드</LabelText><Launcher aria-label="클립보드 옵션"><LaunchIcon c="#333" /></Launcher></GroupLabel>
      </Group>
      <FontGroup />
      <ParagraphGroup />
      <Group $w={587} $grow>
        <GroupBody $row>
          <Gallery>
            <Cards>
              <StyleCard $fs={18}>표준</StyleCard>
              <StyleCard $fs={18}>간격 없음</StyleCard>
              <StyleCard $fs={24}>제목 1</StyleCard>
              <StyleCard $fs={18}>제목 2</StyleCard>
            </Cards>
            <GalleryNav>
              <button aria-label="위로"><Svg w={8} h={6} c="#bbb"><path d="M1 4.500 4 1.500 7 4.500" /></Svg></button>
              <button aria-label="아래로"><Chevron /></button>
              <button aria-label="자세히"><Svg w={10} h={9} sw={1.5}><path d="M0 1h10M2 4l3 3 3-3" /></Svg></button>
            </GalleryNav>
          </Gallery>
        </GroupBody>
        <GroupLabel><LabelText>스타일</LabelText><Launcher aria-label="스타일 옵션"><LaunchIcon c="#bbb" /></Launcher></GroupLabel>
      </Group>
      <Group $w={112}>
        <GroupBody $pad="1px 0 0 16px" $gap={8}>
          <EditButton><Lens s={20} c="#444" />찾기<Gap /><Chevron /></EditButton>
          <EditButton><Svg w={20}><path d="M7 1h4c0 3-1 5-3 6M14 0v9M14 4h3" stroke="#777" strokeWidth="1" /><path d="M4 5c-5 3-4 11 3 11M4 13l3 3-3 3M11 11v6h4M17 10v9M17 14h3" stroke="#2088d0" strokeWidth="1.500" /></Svg>바꾸기</EditButton>
          <EditButton><Svg w={20}><path d="M4 1v15l4-4 3 7 2-1-3-7h5z" /></Svg>선택<Chevron /></EditButton>
        </GroupBody>
        <GroupLabel><LabelText>편집</LabelText></GroupLabel>
      </Group>
      <Group $w={72}>
        <GroupBody $pad="3px 0 0">
          <TallButton>
            <Svg w={24} h={38} sw={1.6}><rect x="5" y="1" width="14" height="26" rx="7" fill="#83beec" stroke="#1a7fcf" /><path d="M1 18c0 17 22 17 22 0M12 31v7" /></Svg>
            <span>받아<br />쓰기</span>
          </TallButton>
        </GroupBody>
        <GroupLabel><LabelText>음성</LabelText></GroupLabel>
      </Group>
      <Group $w={72}>
        <GroupBody $pad="3px 0 0">
          <TallButton>
            <Svg w={38} h={38} c="#185abd" sw={2}><path d="M20 13h14M17 22h11M12 31h10" strokeWidth="6" strokeLinecap="round" /><path d="M21 1l8 5L14 29 2 37 5 23z" fill="#fff" /><path d="M21 1l8 5-3 4-8-5z" fill="#185abd" /><path d="m2 37 1-7 4 3z" fill="#185abd" /></Svg>
            <span>편<br />집기</span>
          </TallButton>
        </GroupBody>
        <GroupLabel><LabelText>편집기</LabelText></GroupLabel>
      </Group>
      <Collapse aria-label="리본 축소"><Svg w={12} h={8} sw={1.5}><path d="m1 1 5 5 5-5" /></Svg></Collapse>
    </Ribbon>
  );
}

function Wireshark() {
  return (
    <Shark>
      <SharkTitle>
        <span />
        <span>locallooptcp_port_9190.pcapng</span>
        <SharkWin>
          <RoundButton aria-label="Minimize"><Svg w={7} sw={1}><path d="M1 5.500h5" /></Svg></RoundButton>
          <RoundButton aria-label="Restore"><Svg w={7} sw={1}><path d="M1.500 2.500h3v3h-3zM3 1h3v3" /></Svg></RoundButton>
          <RoundButton aria-label="Close"><Svg w={7} sw={1}><path d="m1 1 5 5M6 1 1 6" /></Svg></RoundButton>
        </SharkWin>
      </SharkTitle>
      <MenuBar>
        {menus.map(([a, b]) => a === "Telephon"
          ? <span key={a}>{a}<u>{b}</u></span>
          : <span key={a}><u>{a}</u>{b}</span>)}
      </MenuBar>
      <SharkTools>
        <SharkTool><Fin s={13} gray="#888" /></SharkTool>
        <SharkTool><Svg w={12} fill="#8a8a8a" c="#bbb"><path d="M1 1h10v10H1z" /></Svg></SharkTool>
        <SharkTool><Fin s={13} gray="#b5b5b5" /></SharkTool>
        <SharkTool><Svg w={14} c="#333" sw={1.4}><circle cx="7" cy="7" r="5.500" fill="#fff" /><circle cx="7" cy="7" r="2" fill="#333" /><path d="M7 3v8M3 7h8" /></Svg></SharkTool>
        <SharkTool $ml={3}><Svg w={15} h={14} c="#555" fill="#666" sw={1}><path d="M1 1h5l1 2h5v10H1z" /><path d="M6 6h8v7H6z" fill="#aaa" /></Svg></SharkTool>
        <SharkTool><Doc><path d="M2 5h8M2 8h8M2 11h8M4 4v9M8 4v9" stroke="#ccc" /></Doc></SharkTool>
        <SharkTool><Doc><path d="m2 4 8 8M10 4l-8 8" stroke="#1d4a6e" strokeWidth="2" /></Doc></SharkTool>
        <SharkTool><Doc><path d="M9 8a3 3 0 1 1-2-3M6 3l2 2-2 2" stroke="#2364ab" strokeWidth="1.600" /></Doc></SharkTool>
        <SharkTool $ml={3}><Glass sign="M5 9.500 7 4l2 5.500M6 8h2" c="#333" /></SharkTool>
        <SharkTool><Svg w={8} h={14} c="#e2622b" sw={2.4}><path d="M6 1.500 2 7l4 5.500" /></Svg></SharkTool>
        <SharkTool><Svg w={8} h={14} c="#e2622b" sw={2.4}><path d="m2 1.500 4 5.500-4 5.500" /></Svg></SharkTool>
        <SharkTool><Svg w={14} c="#e2722b" sw={3}><path d="M1 3c5-2 8 0 8 7M5.500 8l3.500 4 3.500-4" /></Svg></SharkTool>
        <SharkTool><Svg w={14} c="#f04a1c" sw={1.4}><path d="M1 1v12M13 7H3M6 4 3 7l3 3" /></Svg></SharkTool>
        <SharkTool><Svg w={14} c="#f04a1c" sw={1.4}><path d="M13 1v12M1 7h10M8 4l3 3-3 3" /></Svg></SharkTool>
        <SharkTool $on><Svg w={14} c="#aaa" sw={1}><path d="M0 2h14M0 4.500h14M0 7h14" /><path d="M5 9h8l-4 4z" fill="#3465a4" stroke="none" /></Svg></SharkTool>
        <SharkTool $on $ml={3}><Svg w={14} sw={1.3}><path d="M0 1h14" stroke="#e66" /><path d="M0 4h14" stroke="#69c" /><path d="M0 7h14" stroke="#7b7" /><path d="M0 10h14" stroke="#b8c" /><path d="M0 13h14" stroke="#db6" /></Svg></SharkTool>
        <SharkTool $ml={3}><Glass sign="M4 7h6M7 4v6" c="#2a9a2a" /></SharkTool>
        <SharkTool><Glass sign="M4 7h6" c="#d33" /></SharkTool>
        <SharkTool><Glass sign="M5 5v4M9 5v4M7 6v2" c="#777" /></SharkTool>
        <SharkTool><Svg w={13} h={14} c="#999" sw={1}><path d="M1 1v12M5 1v12M8 1v12M12 1v12M0 4h13M0 7h13M0 10h13" /><path d="M2 3h3M8 3h3" stroke="#26588c" strokeWidth="3" /></Svg></SharkTool>
      </SharkTools>
      <FilterRow>
        <FilterBox>
          <Svg w={5} h={9} c="none" fill="#5b83b8"><path d="M0 0h5v9L2.500 7 0 9z" /></Svg>
          <FilterInput defaultValue="tcp.port == 9190" aria-label="Display filter" />
          <Svg w={9} c="#eee" fill="#888" sw={1}><path d="M0 0h9v9H0z" stroke="none" /><path d="m2 2 5 5M7 2 2 7" /></Svg>
          <Svg w={15} h={9} c="#fff" fill="#6a9bd0" sw={1.6}><path d="M0 0h15v9H0z" stroke="none" /><path d="M3 4.500h8M9 2l2.500 2.500L9 7" fill="none" /></Svg>
          <Tri s={4} />
        </FilterBox>
        <Svg w={9} c="#fff" fill="#3da52a" sw={1.6}><circle cx="4.500" cy="4.500" r="4.500" stroke="none" /><path d="M2 4.500h5M4.500 2v5" /></Svg>
      </FilterRow>
      <PacketPane>
        <Packets>
          <colgroup>
            <col width="50" /><col width="79" /><col width="118" /><col width="119" /><col width="45" /><col width="35" /><col />
          </colgroup>
          <thead>
            <tr><th>No.</th><th>Time</th><th>Source</th><th>Destination</th><th>Protocol</th><th>Length</th><th>Info</th></tr>
          </thead>
          <tbody>
            {packets.map(([no, time, len, info, tone]) => (
              <PacketRow key={no} $tone={tone}>
                <td>{no}</td><td>{time}</td><td>127.0.0.1</td><td>127.0.0.1</td><td>TCP</td><td>{len}</td><td>{info}</td>
              </PacketRow>
            ))}
          </tbody>
        </Packets>
      </PacketPane>
      <Split $h={4} />
      <Details>
        <Tree>
          {tree.map(([text, props, twist]) => (
            <Leaf key={text} {...props}>
              <Twist>
                {twist === "down" && <Tri />}
                {twist === "right" && <svg width="5" height="5" viewBox="0 0 6 6" fill="#333"><path d="M1 0l3 3-3 3z" /></svg>}
              </Twist>
              {text}
            </Leaf>
          ))}
        </Tree>
        <MiniScroll>
          <MiniArrow><Tri up s={4} /></MiniArrow>
          <MiniThumb $top={72} />
          <MiniArrow><Tri s={4} /></MiniArrow>
        </MiniScroll>
      </Details>
      <Split $h={4} />
      <HexPane>
        <Hex>
          <colgroup><col width="40" /><col width="141" /><col width="146" /><col width="51" /><col /></colgroup>
          <tbody>
            {hex.map(([off, m, a, b, am, t1, t2]) => (
              <tr key={off}>
                <td>{off}</td><td>{m && <Mark>{m}</Mark>}{a}</td><td>{b}</td><td>{am && <Mark>{am}</Mark>}{t1}</td><td>{t2}</td>
              </tr>
            ))}
          </tbody>
        </Hex>
      </HexPane>
      <SharkStatus>
        <Svg w={9} c="#998" fill="#dede5a" sw={1}><circle cx="4.500" cy="4.500" r="4" /></Svg>
        <Svg w={9} c="#2a6ea8" sw={1.5}><path d="M1 1h5M2 8l6-7" /></Svg>
        <span>Family (null.family), 4 bytes</span>
        <StatusSpread $mr={182}>Packets: 28 · Displayed: 10 (35.7%)</StatusSpread>
        <span>Profile: Default</span>
      </SharkStatus>
    </Shark>
  );
}

function VmPicture() {
  return (
    <Picture>
      <VmTitle>
        <Svg w={13} c="#f0a818" sw={2}><path d="M1 4h4V1M5 4v5h6M8 2h4v4M9 9v3h3" /></Svg>
        Ubuntu 64-bit (2) - VMware Workstation 16 Player (Non-commercial use only)
        <VmButtons>
          <VmButton $w={37} aria-label="Minimize"><Svg w={6} sw={1}><path d="M0 3h6" /></Svg></VmButton>
          <VmButton $w={37} aria-label="Restore"><Svg w={8} sw={1}><path d="M.5 2.500h5v5h-5zM2.500 2V.5h5v5H6" /></Svg></VmButton>
          <VmButton $w={39} $red aria-label="Close"><Svg w={7} c="#ffb0a0" sw={1}><path d="m0 0 7 7M7 0 0 7" /></Svg></VmButton>
        </VmButtons>
      </VmTitle>
      <VmBar>
        <PlayerButton>Player <Tri c="#111" s={6} /></PlayerButton>
        <VmRule />
        <Svg w={10} h={13} c="#f26a21" sw={3.5}><path d="M2 0v13M8 0v13" /></Svg>
        <Tri c="#888" s={6} />
        <Svg w={14} c="#555" sw={1.2}><path d="M4 5V1h6v4M1 5h12v4H1zM4 9v3h3M10 8v5M8 11l2 2 2-2" /></Svg>
        <Svg w={15} h={14} c="#666" sw={1.1}><path d="M1 4V1h3M11 1h3v3M14 10v3h-3M4 13H1v-3M4 4h7v6H4z" /></Svg>
        <Svg w={14} c="#666" sw={1.1}><path d="M1 3h8v10H1zM5 1h8v10h-3M0 0l14 14" /></Svg>
        <Push />
        <Device d={<path d="m1 3 4 3-4 3M6 3l5 3-5 3M1 6h9" />} />
        <Device dot d={<path d="M1 7 3 2h6l2 5v3H1zM1 7h10" />} />
        <Device dot d={<><circle cx="6" cy="6" r="5" /><circle cx="6" cy="6" r="1" /></>} />
        <Device dot d={<path d="M1 1h6v5H1zM5 4h6v5H5zM3 6v4h3" />} />
        <Device c="#bbb" d={<path d="M3 5V1h6v4M1 5h10v4H1zM3 8h6v3H3z" />} />
        <Device dot d={<path d="M1 4h2l3-3v10L3 8H1zM8 4v4" />} />
        <Device c="#ccc" d={<><circle cx="6" cy="6" r="5" /><circle cx="6" cy="6" r="2" /></>} />
        <Device c="#ccc" d={<><circle cx="5" cy="4" r="2" /><path d="M1 11c1-4 7-4 8 0M9 3v4M11 2v6" /></>} />
        <VmRule />
        <Svg w={14} c="#14776c" fill="#36d3c0" sw={1}><path d="M.5.500h13v9l-4 4H.5z" /><path d="M3 4h8M3 6.500h8M9.500 13V9.500H13" /></Svg>
      </VmBar>
      <TopBar>
        <TopLeft>
          <span>Activities</span>
          <TopApp><Fin s={10} gray="#777" />Wireshark</TopApp>
        </TopLeft>
        <Clock>9월 30&nbsp; 16 : 41</Clock>
        <TopRight>
          <Svg w={10} c="#eee" fill="#eee" sw={1}><path d="M3.500 1h3v2h-3zM0 7h3v2H0zM7 7h3v2H7zM5 3v2M1.500 7V5h7v2" /></Svg>
          <Svg w={10} c="#888" sw={1}><path d="M1 4h2l2-3v8L3 6H1zM7 2v6M9 1v8M0 1l8 8" /></Svg>
          <Svg w={10} c="#ccc" sw={1}><path d="M5 0v5M3 1.500a4 4 0 1 0 4 0" /></Svg>
        </TopRight>
      </TopBar>
      <Desktop>
        <Dock>
          <DockList>
            {dockIcons.map(([name, icon]) => <DockItem key={name} aria-label={name} $dot={name === "Files"}>{icon}</DockItem>)}
          </DockList>
          <DockRule />
          <DockItem $fixed $dot aria-label="Wireshark window"><DockActive><Fin /></DockActive></DockItem>
          <DockItem $fixed aria-label="Disc"><svg width="28" height="28" viewBox="0 0 28 28"><circle cx="14" cy="14" r="14" fill="#cfcfcf" /><path d="M14 14 4 4a14 14 0 0 1 14-3zM14 14l10 10a14 14 0 0 1-14 3z" fill="#ececec" /><circle cx="14" cy="14" r="4.500" fill="#eee" stroke="#b9ac96" /><circle cx="14" cy="14" r="2" fill="#333" /></svg></DockItem>
          <DockItem $fixed aria-label="Trash"><svg width="24" height="28" viewBox="0 0 24 28"><rect width="24" height="28" rx="3" fill="#c4c4c4" /><path d="M3 2h18v4H3z" fill="#f4f4f4" /><path d="m9 15 3-4 3 4M17 16l1 4-4 2M10 22l-4-2 2-4" stroke="#2c9a2c" strokeWidth="2.500" fill="none" /></svg></DockItem>
          <DockFoot><Svg w={20} c="none" fill="#fff">{[0, 8, 16].map((y) => [0, 8, 16].map((x) => <rect key={x + "-" + y} x={x} y={y} width="4" height="4" rx="1" />))}</Svg></DockFoot>
        </Dock>
        <Wireshark />
      </Desktop>
      <Rotate>
        <Svg w={32} h={58} c="#5b5b5b" sw={2.6}>
          <path d="M12 28v30" strokeWidth="1" />
          <path d="M20 24A11.500 11.500 0 1 1 23.500 16" /><path d="M15 20A6 6 0 1 1 18 15" strokeWidth="2.200" />
          <path d="M16 15h13l-6.500 8z" fill="#fff" strokeWidth="2" />
        </Svg>
      </Rotate>
      {[["0%", "0%"], ["50%", "0%"], ["100%", "0%"], ["0%", "50%"], ["100%", "50%"]].map(([x, y]) => <Handle key={x + y} $x={x} $y={y} />)}
      <LayoutOptions aria-label="레이아웃 옵션">
        <Svg w={22} h={22} c="#2b8ad2" sw={1.6}><path d="M0 1h22M0 6h22M0 11h3M19 11h3M0 16h3M19 16h3M0 21h22" /><path d="M5 16c0-9 12-9 12 0" stroke="#333" strokeWidth="3.500" /></Svg>
      </LayoutOptions>
    </Picture>
  );
}

export default function App() {
  return (
    <Shell>
      <Global />
      <TitleBar>
        <TitleLeft>
          <WordLogo />
          <AutoSave>자동 저장<Switch><SwitchBox type="checkbox" />끔</Switch></AutoSave>
          <Svg w={20} c="#9332a0" fill="#d58bd8" sw={1.6}><path d="M1 1h18v18H4l-3-3z" /><path d="M5 1h10v8H5zM5 19v-6h9v6M8 15v4" fill="#fff" /></Svg>
          <DocName>{"문서1   -   Word"}</DocName>
        </TitleLeft>
        <SearchBox><Lens s={19} c="#666" /><SearchInput placeholder="검색(Alt+Q)" aria-label="검색" /></SearchBox>
        <TitleRight>
          mouse4432@gmail.com
          <Avatar>M</Avatar>
          <PenButton aria-label="새로운 기능"><Svg w={20} sw={1.4}><path d="m1 16 9-12 6 5-11 9H1zM7 16c2 3 5 1 5-2" /><path d="M13 3V0M15 4l2-3M17 6h3" stroke="#2b8ad2" /></Svg></PenButton>
          <WinButton aria-label="최소화"><Svg w={12} h={2}><path d="M0 1h12" /></Svg></WinButton>
          <WinButton aria-label="이전 크기로"><Svg w={13} sw={1.4}><rect x="1" y="3" width="9" height="9" rx="2" /><path d="M4 1h5c2 0 3 1 3 3v5" /></Svg></WinButton>
          <WinButton aria-label="닫기"><Svg w={13}><path d="m1 1 11 11M12 1 1 12" /></Svg></WinButton>
        </TitleRight>
      </TitleBar>
      <TabBar>
        {["파일", "홈", "삽입", "그리기", "디자인", "레이아웃", "참조", "편지", "검토", "보기", "도움말", "ACROBAT", "그림 서식"].map((t) => (
          <Tab key={t} $file={t === "파일"} $on={t === "홈"} $blue={t === "그림 서식"} $latin={t === "ACROBAT"}>{t}</Tab>
        ))}
        <TabSpace />
        <MemoButton><Svg w={16}><path d="M1 2h13v9H7l-3 3v-3H1z" /></Svg>메모</MemoButton>
        <ShareButton><Svg w={16} c="#fff"><path d="M5 4H1v11h12v-4M4 11c0-5 3-6 7-6V2l4 4-4 4V7" /></Svg>공유<Gap /><Chevron c="#fff" /></ShareButton>
      </TabBar>
      <WordRibbon />
      <Workspace>
        <Canvas>
          <Page>
            <Margins />
            <Heading $h={61} $pad="0" $pb={6}><span>데이터 전송 과정</span><Return /></Heading>
            <Strip>
              <colgroup><col width="50" /><col width="5" /><col width="82" /><col width="123" /><col width="124" /><col width="40" /><col width="40" /><col width="5" /><col /></colgroup>
              <tbody>
                {strip.map(([no, time, len, info]) => (
                  <tr key={no}><Num>{no}</Num><td /><td>{time}</td><td>127.0.0.1</td><td>127.0.0.1</td><td>TCP</td><Num>{len}</Num><td /><td>{info}</td></tr>
                ))}
              </tbody>
            </Strip>
            <Heading as="h2" $h={48} $pad="2px" $pb={0} $gap={14}><span>주고받은 데이터</span><Return /></Heading>
            <VmPicture />
            <AnchorMark><Svg w={14} h={19} c="#2b8ad2"><circle cx="7" cy="3" r="2" /><path d="M7 5v13M4 8h6M1 11c0 9 12 9 12 0M0 13l1-2 2 2M11 13l2-2 1 2" /></Svg></AnchorMark>
          </Page>
        </Canvas>
        <ScrollRail>
          <Tri up s={10} c="#666" />
          <ScrollTrack><ScrollThumb /></ScrollTrack>
          <Tri s={10} c="#666" />
        </ScrollRail>
      </Workspace>
      <StatusBar>
        <StatusButton $mr={25}>1/1 페이지</StatusButton>
        <StatusButton $mr={24}>5개 단어</StatusButton>
        <StatusButton $mr={22} aria-label="맞춤법 검사"><Svg w={19} h={17}><path d="M9 3C7 1 3 1 1 2v12c2-1 6-1 8 1V3c2-2 5-2 8-1v6M9 12l3 4 6-6" /></Svg></StatusButton>
        <StatusButton $mr={24}>영어(미국)</StatusButton>
        <StatusButton><Svg w={18} h={18}><circle cx="9" cy="3" r="2" /><path d="M1 4c5 3 11 3 16 0M6 6v5l-3 6M12 6v3M7 12l2-2M10 11l6 6M16 11l-6 6" /></Svg>접근성: 조사 필요</StatusButton>
        <StatusSpace />
        <StatusButton $mr={20}><Svg w={18}><path d="M1 5V1h3M14 1h3v4M17 13v4h-3M4 17H1v-4M5 4h5l3 3v8H5zM10 4v3h3" /></Svg>포커스</StatusButton>
        <StatusButton $w={48} aria-label="읽기 모드"><Svg w={17} h={16}><path d="M1 2h7v12H1zM9 2h7v12H9zM3 5h3M3 8h3M3 11h3M11 5h3M11 8h3M11 11h3" /></Svg></StatusButton>
        <StatusButton $w={50} $on aria-label="인쇄 모양"><Svg w={15} h={18}><path d="M1 1h13v16H1zM3 4h9M3 7h9M3 10h9M3 13h9" /></Svg></StatusButton>
        <StatusButton $w={50} aria-label="웹 모양"><Svg w={18}><path d="M8 16H1V1h14v5M3 4h10M3 7h5M3 10h3" /><circle cx="12" cy="12" r="5" /><path d="M7 12h10M12 7v10" /></Svg></StatusButton>
        <StatusButton $w={22} aria-label="축소"><Svg w={10}><path d="M0 5h10" /></Svg></StatusButton>
        <Zoom type="range" min="0" max="100" defaultValue="58" aria-label="확대/축소" />
        <StatusButton $mr={16} aria-label="확대"><Svg w={10}><path d="M0 5h10M5 0v10" /></Svg></StatusButton>
        <StatusButton>160%</StatusButton>
      </StatusBar>
      <Taskbar>
        <Task aria-label="시작"><svg width="29" height="29" viewBox="0 0 29 29"><defs><linearGradient id="win" x2="1" y2="1"><stop stopColor="#3fc8fb" /><stop offset="1" stopColor="#0468cc" /></linearGradient></defs><path d="M0 0h14v14H0zM15 0h14v14H15zM0 15h14v14H0zM15 15h14v14H15z" fill="url(#win)" /></svg></Task>
        <Task aria-label="검색"><Svg w={28} c="#2a2a2a" sw={3}><circle cx="16" cy="12" r="10" /><path d="m8 20-6 7" strokeWidth="4" /></Svg></Task>
        <Task aria-label="작업 보기"><svg width="29" height="29" viewBox="0 0 29 29"><path d="M0 8h22v21H0z" fill="#2d2d2d" /><path d="M8 0h21v20H8z" fill="#f2f2f2" /><path d="M8 8h14v12H8z" fill="#b5b5b5" /></svg></Task>
        <Task aria-label="날씨"><Weather><Temp>30°</Temp></Weather></Task>
        <Task aria-label="채팅"><svg width="29" height="29" viewBox="0 0 29 29"><path d="M15 0a14 14 0 1 1-7 26l-7 2 2-7A14 14 0 0 1 15 0z" fill="#6a5cc4" /><path d="M15 0a14 14 0 0 1 13 14L8 3z" fill="#7e8fdf" /><rect x="7" y="9" width="11" height="11" rx="2" fill="#fff" /><path d="m19 13 4-3v9l-4-3z" fill="#fff" /></svg></Task>
        <Task aria-label="Discord"><svg width="30" height="30" viewBox="0 0 30 30"><circle cx="15" cy="15" r="15" fill="#5865f2" /><path d="M9 9c4-2 8-2 12 0 2 4 3 7 3 11l-4 2-1.500-2.500c-2 .8-5 .8-7 0L10 22l-4-2c0-4 1-7 3-11z" fill="#fff" /><circle cx="12" cy="16" r="1.800" fill="#5865f2" /><circle cx="18" cy="16" r="1.800" fill="#5865f2" /></svg></Task>
        <Task aria-label="Microsoft Store"><svg width="29" height="29" viewBox="0 0 29 29"><path d="M0 4h29v21a4 4 0 0 1-4 4H4a4 4 0 0 1-4-4z" fill="#17538f" /><path d="M8 5V1h13v4" fill="none" stroke="#29b4f2" strokeWidth="2" /><path d="M9 11h5v5H9z" fill="#f25022" /><path d="M15 11h5v5h-5z" fill="#7fba00" /><path d="M9 17h5v5H9z" fill="#00a4ef" /><path d="M15 17h5v5h-5z" fill="#ffb900" /></svg></Task>
        <Task $open aria-label="파일 탐색기"><svg width="31" height="28" viewBox="0 0 31 28"><path d="M0 2a2 2 0 0 1 2-2h8l3 3h17v9H0z" fill="#dd9a0c" /><path d="M0 7h12l3-3h16v23H0z" fill="#ffcf4f" /><path d="M5 27v-5a3 3 0 0 1 3-3h15a3 3 0 0 1 3 3v5z" fill="#1273c4" /><path d="M9 23h13" stroke="#0d4c8a" /></svg></Task>
        <Task $open aria-label="Edge"><svg width="31" height="30" viewBox="0 0 31 30"><circle cx="15.500" cy="15" r="15" fill="#1475cc" /><path d="M1 12C4-3 28-4 30 13c0 6-7 8-12 5 4-6-8-12-17-6z" fill="#35c1c9" /><path d="M20 1c7 3 10 8 10 12 0 5-5 7-9 6 2-6 1-12-1-18z" fill="#5fd25b" /><path d="M12 14c-3 8 5 14 15 10-6 8-18 7-21-1-2-6 1-9 6-9z" fill="#0f4c94" /><path d="M17 12c-4 3-2 10 5 10 4 0 7-2 8-4l-3 6c-9 2-14-3-13-9 0-1 1-3 3-3z" fill="#d5e9f2" /></svg></Task>
        <Task $active aria-label="Word"><Tile><WordLogo s={29} /></Tile></Task>
        <Tray>
          <TrayButton aria-label="숨겨진 아이콘"><Svg w={16} h={10} sw={1.6}><path d="m1 9 7-7 7 7" /></Svg></TrayButton>
          <TrayButton $w={32} aria-label="OneDrive"><svg width="20" height="16" viewBox="0 0 20 16"><path d="M5 15a4.500 4.500 0 0 1-1-9C6-1 14 0 15 5c6 0 6 10 0 10z" fill="#8f8f8f" stroke="#333" /><path d="M4 15 11 8l7 5c-1 2-2 2-3 2z" fill="#e6e6e6" /></svg></TrayButton>
          <TrayButton $w={40} $ime>가</TrayButton>
          <TrayButton $w={38} aria-label="네트워크"><Svg w={20} h={16} sw={1.6}><path d="M1 6c5-6 13-6 18 0M4 9c3-4 9-4 12 0M7 12c2-2 4-2 6 0" /><circle cx="10" cy="14" r="1.500" fill="#333" /></Svg></TrayButton>
          <TrayButton $w={26} aria-label="소리"><Svg w={20} h={16}><path d="M1 5h3l5-4v14l-5-4H1zM13 5l6 6M19 5l-6 6" /></Svg></TrayButton>
          <TrayButton $w={34} aria-label="배터리"><Svg w={20} h={17} c="#222" sw={1.6}><path d="M8 4h10v11H5v-4M19.500 7v5" /><path d="M8 7h7v6H8z" fill="#222" /><path d="M1 1v5h5V1M3.500 6v5" fill="#222" /></Svg></TrayButton>
          <DateTime><span>오후 4:51</span><span>2022-09-30</span></DateTime>
          <Notice>1</Notice>
        </Tray>
      </Taskbar>
    </Shell>
  );
}
